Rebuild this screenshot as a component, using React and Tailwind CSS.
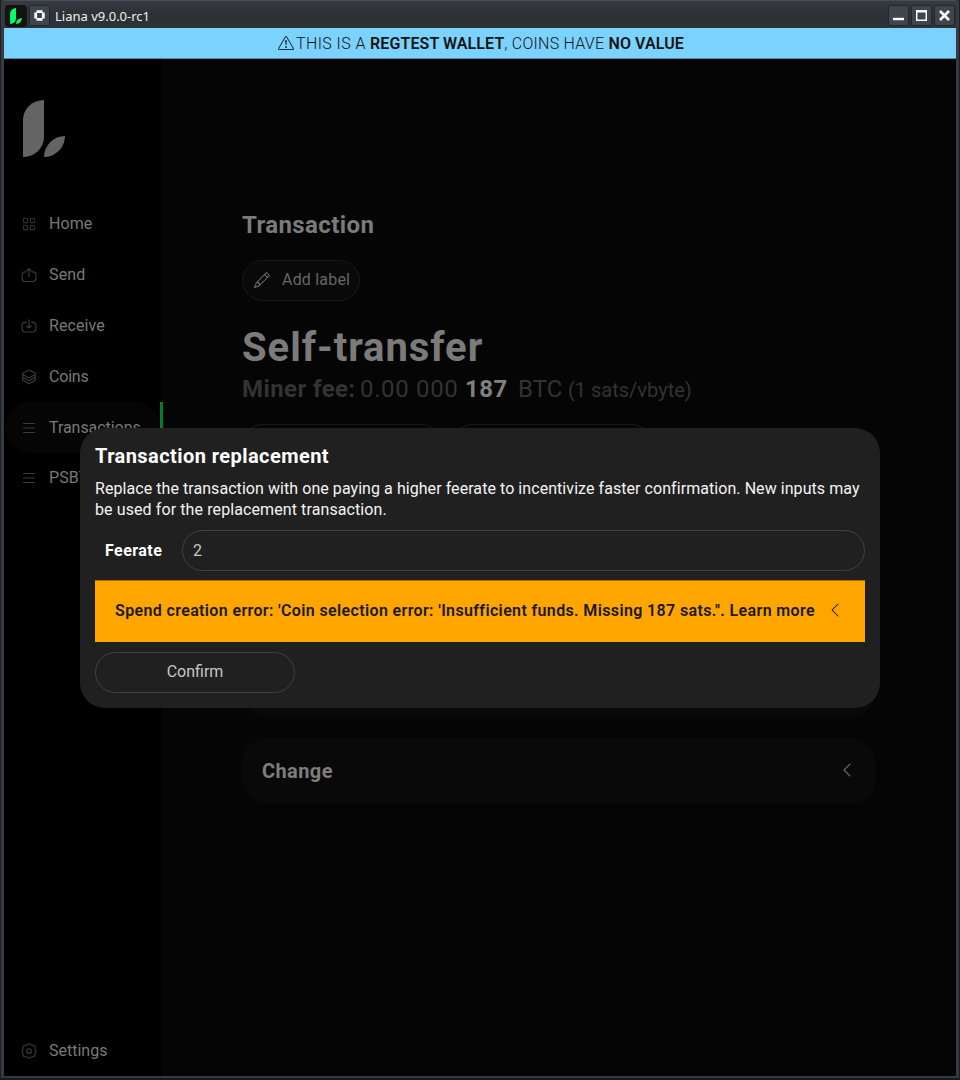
import React from "react";
import { BsGrid, BsList, BsPencil, BsChevronLeft, BsExclamationTriangle } from "react-icons/bs";

const line = {
  fill: "none",
  stroke: "currentColor",
  strokeWidth: 1.15,
  strokeLinecap: "round",
  strokeLinejoin: "round",
  viewBox: "0 0 16 16",
  className: "size-4",
};

const SendIcon = () => (
  <svg {...line}>
    <path d="M5.2 4.9H4A2.9 2.9 0 0 0 1.1 7.8v3.8A2.9 2.9 0 0 0 4 14.5h8a2.9 2.9 0 0 0 2.9-2.9V7.8A2.9 2.9 0 0 0 12 4.9h-1.2M8 9.7V1.5M5.8 3.6 8 1.4l2.200 2.200" />
  </svg>
);

const ReceiveIcon = () => (
  <svg {...line}>
    <path d="M5.2 4.4H4A2.9 2.9 0 0 0 1.1 7.3v3.8A2.9 2.9 0 0 0 4 14h8a2.9 2.9 0 0 0 2.9-2.9V7.3A2.9 2.9 0 0 0 12 4.4h-1.2M8 1.8V10M5.8 7.9 8 10.1l2.200-2.200" />
  </svg>
);

const CoinsIcon = () => (
  <svg {...line}>
    <path d="M8 1 14.3 4.300v1.300L8 9 1.700 5.600V4.300ZM1.700 5.600v2.600L8 11.700l6.300-3.500V5.600M1.700 8.200v2.900L8 14.700l6.300-3.600V8.200" />
  </svg>
);

const SettingsIcon = () => (
  <svg {...line}>
    <path d="M6.800 1.300a2.200 2.200 0 0 1 2.400 0l.7.600a2 2 0 0 0 1.200.400l.8 0a2.100 2.100 0 0 1 2.100 2l0 .9a2 2 0 0 0 .200 1l.4.800a2 2 0 0 1 0 2l-.4.800a2 2 0 0 0-.2 1l0 .9a2.100 2.100 0 0 1-2.100 2l-.8 0a2 2 0 0 0-1.200.400l-.7.600a2.200 2.200 0 0 1-2.400 0l-.7-.600a2 2 0 0 0-1.200-.400l-.8 0a2.100 2.100 0 0 1-2.100-2l0-.9a2 2 0 0 0-.200-1l-.4-.8a2 2 0 0 1 0-2l.4-.8a2 2 0 0 0 .2-1l0-.9a2.100 2.100 0 0 1 2.100-2l.8 0a2 2 0 0 0 1.200-.400Z" />
    <circle cx="8" cy="8" r="2.300" />
  </svg>
);

const Leaf = ({ className }) => (
  <svg viewBox="0 0 42 57" fill="currentColor" className={className}>
    <path d="M21 0v37A21 20 0 0 1 0 57V20A21 20 0 0 1 21 0Z" />
    <path d="M42 36A21 21 0 0 1 21 57A21 21 0 0 1 42 36Z" />
  </svg>
);

const nav = [
  { label: "Home", icon: <BsGrid className="size-[14px]" />, track: "tracking-[0.05px]" },
  { label: "Send", icon: <SendIcon />, track: "tracking-[0.15px]" },
  { label: "Receive", icon: <ReceiveIcon />, track: "tracking-[0.1px]" },
  { label: "Coins", icon: <CoinsIcon />, track: "tracking-[-0.2px]" },
  { label: "Transactions", icon: <BsList className="size-[18px]" />, track: "tracking-[-0.05px]", active: true },
  { label: "PSBTs", icon: <BsList className="size-[18px]" />, track: "tracking-[0.1px]" },
];

function NavItem({ label, icon, track, active }) {
  return (
    <div className={`flex h-[50.800px] items-center ${active ? "-mr-px border-r-[3px] border-[#00802c]" : ""}`}>
      <div className={`flex h-full flex-1 items-center rounded-full pl-[15px] ${active ? "bg-[#050505]" : ""}`}>
        <span className="flex w-[18px] justify-center text-[#3a3a3a]">{icon}</span>
        <span className={`ml-[11px] text-base text-[#787878] ${track}`}>{label}</span>
      </div>
    </div>
  );
}

const WindowButton = ({ children }) => (
  <span className="flex size-[21px] items-center justify-center rounded-[2px] border border-[#23272b] bg-[#3f454d]">
    {children}
  </span>
);

function TitleBar() {
  return (
    <header className="flex h-[28px] shrink-0 items-center border-t border-[#4a4d56] bg-linear-to-b from-[#373b41] via-[#2c3135] to-[#2e3337] pt-[2px] pr-[1px] pl-[1px]">
      <span className="flex size-[22px] items-center justify-center rounded-[4px] bg-[#131313] text-[#00ff66]">
        <Leaf className="h-4 w-3" />
      </span>
      <span className="ml-[2px]">
        <WindowButton>
          <svg viewBox="0 0 11 11" className="size-[11px]">
            <path d="M2.500 1.700h6M2.500 9.300h6M1.700 2.500v6M9.300 2.500v6" stroke="#fff" strokeWidth="2.800" />
          </svg>
        </WindowButton>
      </span>
      <span className="ml-[5px] pt-[2px] font-['Noto_Sans',sans-serif] text-[13px] text-[#f0f0f0]">Liana v9.0.0-rc1</span>
      <div className="ml-auto flex gap-[2px]">
        <WindowButton>
          <svg viewBox="0 0 11 11" className="size-[11px]">
            <path d="M0 9h11" stroke="#fff" strokeWidth="2.400" />
          </svg>
        </WindowButton>
        <WindowButton>
          <svg viewBox="0 0 11 11" className="size-[11px]">
            <path d="M.7 0v11M10.300 0v11M0 10.300h11" fill="none" stroke="#fff" strokeWidth="1.500" />
            <path d="M0 1.300h11" stroke="#fff" strokeWidth="2.400" />
          </svg>
        </WindowButton>
        <WindowButton>
          <svg viewBox="0 0 11 11" className="size-[11px]">
            <path d="m1 1 9 9M10 1 1 10" stroke="#fff" strokeWidth="2.600" />
          </svg>
        </WindowButton>
      </div>
    </header>
  );
}

function Banner() {
  return (
    <div className="flex h-[31px] shrink-0 items-center justify-center border-b border-[#4f88a8] bg-[#7bd2fd] pt-[2px] pl-[2px] text-base whitespace-pre text-[#141414]">
      <BsExclamationTriangle className="mr-[2px] mb-[2px] size-4 text-[#17343f]" />
      <span className="font-light tracking-[0.4px]">THIS IS A </span>
      <span className="font-semibold tracking-[0.1px]">REGTEST WALLET</span>
      <span className="font-light tracking-[0.25px]">, COINS HAVE </span>
      <span className="font-semibold tracking-[0.1px]">NO VALUE</span>
    </div>
  );
}

function Sidebar() {
  return (
    <aside className="z-10 flex w-[158px] shrink-0 flex-col bg-black pt-[41px] pl-px">
      <Leaf className="ml-[18px] h-[57px] w-[42px] text-[#646464]" />
      <nav className="mt-[42px]">
        {nav.map((n) => (
          <NavItem key={n.label} {...n} />
        ))}
      </nav>
      <div className="mt-auto">
        <NavItem label="Settings" icon={<SettingsIcon />} track="tracking-normal" />
      </div>
    </aside>
  );
}

function TransactionPage() {
  return (
    <main className="flex flex-1 flex-col bg-[#050505] pt-[150px] pr-[80px] pl-[80px] text-[#7b7b7b]">
      <h1 className="h-[32px] text-2xl leading-[32px] font-bold tracking-[0.4px]">Transaction</h1>
      <div className="mt-[19px] flex h-[41px] w-[118px] items-center rounded-full border border-[#191919] bg-[#090909] pb-px pl-[11px]">
        <BsPencil className="size-4 text-[#6d6d6d]" />
        <span className="ml-3 text-base whitespace-nowrap tracking-[0.2px] text-[#666]">Add label</span>
      </div>
      <h2 className="mt-[21px] h-[52px] text-[40px] leading-[52px] font-bold tracking-[0.95px]">Self-transfer</h2>
      <div className="flex h-[31px] items-center text-2xl leading-[31px] whitespace-nowrap text-[#333]">
        <span className="w-[118px] font-bold tracking-[0.4px]">Miner fee:</span>
        <span className="w-[105px] tracking-[0.65px]">0.00 000</span>
        <span className="w-[53px] font-bold tracking-[0.5px] text-[#808080]">187</span>
        <span className="w-[50px]">BTC</span>
        <span className="text-xl">(1 sats/vbyte)</span>
      </div>
      <div className="mt-[19px] flex gap-[10px]">
        <div className="h-[41px] w-[200px] rounded-full border border-[#1b1b1b]" />
        <div className="h-[41px] w-[200px] rounded-full border border-[#1b1b1b]" />
      </div>
      <div className="mt-[20px] h-[232px] w-[634px] rounded-[25px] bg-[#090909]" />
      <div className="mt-[21px] flex h-[66px] w-[634px] shrink-0 items-center justify-between rounded-[25px] bg-[#090909] pr-[21px] pl-5">
        <span className="text-xl font-bold tracking-[0.4px] text-[#7d7d7d]">Change</span>
        <BsChevronLeft className="mb-[2px] size-4 text-[#858585]" />
      </div>
    </main>
  );
}

function ReplacementDialog() {
  return (
    <section role="dialog" className="flex h-[280px] w-[800px] flex-col rounded-[25px] bg-[#202020] px-[15px] pt-[15px] text-white">
      <h3 className="h-[26px] text-xl leading-[27px] font-bold tracking-[0.43px]">Transaction replacement</h3>
      <p className="mt-[9px] text-base leading-[21px] whitespace-nowrap text-[#f4f4f4]">
        <span className="tracking-[0.06px]">
          Replace the transaction with one paying a higher feerate to incentivize faster confirmation. New inputs may
        </span>
        <br />
        <span className="tracking-[0.1px]">be used for the replacement transaction.</span>
      </p>
      <div className="mt-[10px] flex h-[41px] items-center">
        <label className="w-[87px] pt-[2px] pl-[10px] text-base font-bold tracking-[0.45px]">Feerate</label>
        <div className="flex h-full flex-1 items-center rounded-full border border-[#414141] pt-px pl-[10px] text-base text-[#c6c6c6]">2</div>
      </div>
      <div className="mt-[9px] flex h-[62px] items-center border-t border-[#a66d08] bg-[#ffa500] pl-5 text-base whitespace-nowrap text-[#191919]">
        <span className="w-[712px] font-semibold tracking-[0.365px]">
          Spend creation error: 'Coin selection error: 'Insufficient funds. Missing 187 sats.''. Learn more
        </span>
        <BsChevronLeft className="mb-[2px] size-4" />
      </div>
      <button className="mt-[10px] h-[41px] w-[200px] rounded-full border border-[#414141] text-base text-[#c6c6c6]">
        Confirm
      </button>
    </section>
  );
}

export default function App() {
  return (
    <div className="h-[1080px] w-[960px] bg-[#171a20] font-['Roboto','Liberation_Sans',sans-serif]">
      <div className="flex h-[1078px] flex-col border-x border-[#1b1e22] bg-[#343a40] px-[3px] pb-[2px]">
        <TitleBar />
        <Banner />
        <div className="relative flex min-h-0 flex-1">
          <Sidebar />
          <TransactionPage />
          <div className="absolute inset-0 z-20 flex items-center justify-center">
            <ReplacementDialog />
          </div>
        </div>
      </div>
    </div>
  );
}
